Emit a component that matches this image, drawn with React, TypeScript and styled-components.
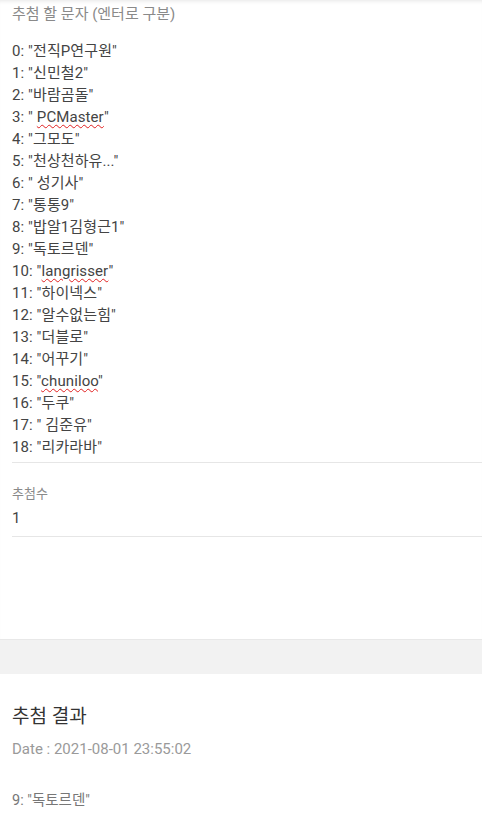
import styled, { createGlobalStyle } from 'styled-components';

const GlobalStyle = createGlobalStyle`
  html, body {
    margin: 0;
    padding: 0;
    background: #fff;
    font-family: Roboto, "Noto Sans CJK KR", sans-serif;
  }
`;

const Page = styled.div`
  width: 482px;
  overflow: hidden;
`;

const InputCard = styled.section`
  background: #fff;
  padding: 0 0 102px 12px;
  box-shadow: inset 0 4px 4px -3px rgba(0, 0, 0, 0.1);
`;

const FieldLabel = styled.div<{ $small?: boolean }>`
  color: #8a8a8a;
  font-size: ${(p) => (p.$small ? '13px' : '15px')};
  line-height: ${(p) => (p.$small ? '18px' : '22px')};
  padding-top: ${(p) => (p.$small ? '22px' : '3px')};
`;

const List = styled.div`
  padding: 15px 0 4px;
  border-bottom: 1px solid #e6e6e6;
`;

const Line = styled.div`
  color: #444;
  font-size: 15px;
  line-height: 22px;
  white-space: pre;
  letter-spacing: 0.1px;
`;

const Typo = styled.span`
  text-decoration: underline wavy #e02020;
  text-decoration-thickness: 1px;
  text-underline-offset: 2px;
`;

const Field = styled.div`
  border-bottom: 1px solid #e6e6e6;
  padding-bottom: 7px;
`;

const FieldValue = styled.div`
  color: #444;
  font-size: 15px;
  line-height: 22px;
  padding-top: 4px;
`;

const Band = styled.div`
  height: 34px;
  background: #f2f2f2;
  border-top: 1px solid #e8e8e8;
`;

const ResultCard = styled.section`
  padding: 29px 12px 20px;
`;

const Title = styled.h2`
  margin: 0;
  color: #333;
  font-size: 19px;
  font-weight: 400;
  line-height: 28px;
`;

const DateText = styled.div`
  color: #9a9a9a;
  font-size: 15px;
  line-height: 20px;
  margin-top: 8px;
`;

const Winner = styled.div`
  color: #777;
  font-size: 14.5px;
  line-height: 20px;
  margin-top: 32px;
`;

const names: string[] = [
  '전직P연구원',
  '신민철2',
  '바람곰돌',
  ' PCMaster',
  '그모도',
  '천상천하유...',
  ' 성기사',
  '통통9',
  '밥알1김형근1',
  '독토르덴',
  'langrisser',
  '하이넥스',
  '알수없는힘',
  '더블로',
  '어꾸기',
  'chuniloo',
  '두쿠',
  ' 김준유',
  '리카라바',
];

const typos = ['PCMaster', 'langrisser', 'chuniloo'];

const renderName = (name: string) => {
  const word = name.trim();
  if (!typos.includes(word)) return name;
  const lead = name.slice(0, name.indexOf(word));
  return (
    <>
      {lead}
      <Typo>{word}</Typo>
    </>
  );
};

export default function App() {
  return (
    <Page>
      <GlobalStyle />
      <InputCard>
        <FieldLabel>추첨 할 문자 (엔터로 구분)</FieldLabel>
        <List>
          {names.map((name, i) => (
            <Line key={i}>
              {i}: "{renderName(name)}"
            </Line>
          ))}
        </List>
        <Field>
          <FieldLabel $small>추첨수</FieldLabel>
          <FieldValue>1</FieldValue>
        </Field>
      </InputCard>
      <Band />
      <ResultCard>
        <Title>추첨 결과</Title>
        <DateText>Date : 2021-08-01 23:55:02</DateText>
        <Winner>9: "독토르덴"</Winner>
      </ResultCard>
    </Page>
  );
}
